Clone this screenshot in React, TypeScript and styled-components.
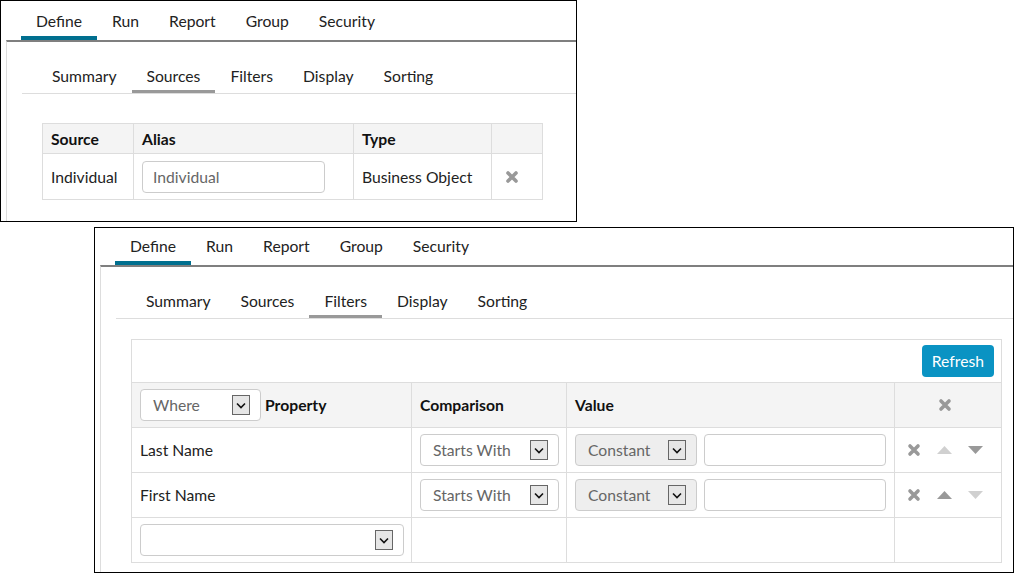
import styled, { createGlobalStyle } from 'styled-components';

const GlobalStyle = createGlobalStyle`
    body {
        margin: 0;
        background-color: white;
        font-family: Lato, 'Open Sans', sans-serif;
        font-size: 15.7px;
        color: #222;
    }
`;

const Page = styled.div`
    display: flex;
    flex-direction: column;
    align-items: flex-start;
`;

const Panel = styled.section<{ $width: number; $height: number; $offset?: number }>`
    box-sizing: border-box;
    display: flex;
    flex-direction: column;
    width: ${(p) => p.$width}px;
    height: ${(p) => p.$height}px;
    margin: ${(p) => (p.$offset ? `5px 0 0 ${p.$offset}px` : '0')};
    padding-left: 5px;
    border: 1px solid #000;
    background: #fff;
`;

const TabBar = styled.nav<{ $top: number }>`
    display: flex;
    padding: ${(p) => p.$top}px 0 0 15px;
`;

const Tab = styled.div<{ $active?: boolean }>`
    padding: 0 15px 5px;
    line-height: 20px;
    color: #222;
    border-bottom: 4px solid ${(p) => (p.$active ? '#006f8f' : 'transparent')};
`;

const TabContent = styled.div`
    flex: 1;
    padding-left: 15px;
    border-top: 2px solid #7f7f7f;
    border-left: 1px solid #ddd;
`;

const SubTabBar = styled.nav`
    display: flex;
    margin-top: 20px;
    padding-left: 15px;
    border-bottom: 1px solid #ddd;
`;

const SubTab = styled.div<{ $active?: boolean }>`
    padding: 4px 15px;
    line-height: 20px;
    color: #222;
    border-bottom: 3px solid ${(p) => (p.$active ? '#999' : 'transparent')};
`;

const Grid = styled.table<{ $width: number; $top: number; $left: number }>`
    width: ${(p) => p.$width}px;
    margin: ${(p) => p.$top}px 0 0 ${(p) => p.$left}px;
    border-collapse: collapse;
    table-layout: fixed;

    th,
    td {
        border: 1px solid #ddd;
        padding: 0 8px;
        text-align: left;
        vertical-align: middle;
    }

    th {
        background: #f4f4f4;
        font-weight: 700;
        color: #111;
    }
`;

const Row = styled.tr<{ $height: number }>`
    height: ${(p) => p.$height}px;
`;

const ToolbarCell = styled.td`
    && {
        text-align: right;
        padding: 0 7px;
    }
`;

const RefreshButton = styled.button`
    height: 32px;
    padding: 0 10px;
    border: none;
    border-radius: 4px;
    background: #0a93c3;
    color: #fff;
    font-family: inherit;
    font-size: 15.7px;
`;

const TextInput = styled.div<{ $width: number }>`
    box-sizing: border-box;
    display: flex;
    align-items: center;
    width: ${(p) => p.$width}px;
    height: 32px;
    padding: 0 10px;
    border: 1px solid #ccc;
    border-radius: 4px;
    color: #666;
    background: #fff;
`;

const Select = styled.div<{ $width: number; $disabled?: boolean }>`
    box-sizing: border-box;
    display: flex;
    align-items: center;
    justify-content: space-between;
    width: ${(p) => p.$width}px;
    height: 32px;
    padding: 0 10px 0 12px;
    border: 1px solid #ccc;
    border-radius: 4px;
    font-weight: 400;
    color: #666;
    background: ${(p) => (p.$disabled ? '#eee' : '#fff')};
`;

const ArrowBox = styled.span`
    box-sizing: border-box;
    display: flex;
    align-items: center;
    justify-content: center;
    width: 18px;
    height: 20px;
    border: 1px solid #666;
    background: #e6e6e6;
`;

const CellFlex = styled.div<{ $gap: number }>`
    display: flex;
    align-items: center;
    gap: ${(p) => p.$gap}px;
`;

const ActionsCell = styled.div`
    display: flex;
    align-items: center;
    gap: 16px;
    padding-left: 3px;
`;

const IconSlot = styled.span<{ $color: string }>`
    display: flex;
    align-items: center;
    justify-content: center;
    width: 15px;
    color: ${(p) => p.$color};
`;

const RemoveCell = styled.div<{ $pad: number }>`
    display: flex;
    padding-left: ${(p) => p.$pad}px;
    color: #999;
`;

function Chevron() {
    return (
        <svg width="10" height="7" viewBox="0 0 10 7">
            <polyline points="1,1.5 5,5.5 9,1.5" fill="none" stroke="#111" strokeWidth="1.6" />
        </svg>
    );
}

function Cross() {
    return (
        <svg width="14" height="14" viewBox="0 0 14 14">
            <path
                d="M3 3 L11 11 M11 3 L3 11"
                fill="none"
                stroke="currentColor"
                strokeWidth="3.6"
                strokeLinecap="round"
            />
        </svg>
    );
}

function Dropdown({ width, value, disabled }: { width: number; value?: string; disabled?: boolean }) {
    return (
        <Select $width={width} $disabled={disabled}>
            <span>{value}</span>
            <ArrowBox>
                <Chevron />
            </ArrowBox>
        </Select>
    );
}

function Triangle({ up }: { up?: boolean }) {
    return (
        <svg width="15" height="8" viewBox="0 0 15 8">
            <polygon points={up ? '7.5,0 15,8 0,8' : '0,0 15,0 7.5,8'} fill="currentColor" />
        </svg>
    );
}

const mainTabs = ['Define', 'Run', 'Report', 'Group', 'Security'];
const subTabs = ['Summary', 'Sources', 'Filters', 'Display', 'Sorting'];

function Tabs({ top }: { top: number }) {
    return (
        <TabBar $top={top}>
            {mainTabs.map((t) => (
                <Tab key={t} $active={t === 'Define'}>
                    {t}
                </Tab>
            ))}
        </TabBar>
    );
}

function SubTabs({ active }: { active: string }) {
    return (
        <SubTabBar>
            {subTabs.map((t) => (
                <SubTab key={t} $active={t === active}>
                    {t}
                </SubTab>
            ))}
        </SubTabBar>
    );
}

const filters = [
    { name: 'Last Name', upEnabled: false, downEnabled: true },
    { name: 'First Name', upEnabled: true, downEnabled: false },
];

export default function App() {
    return (
        <>
            <GlobalStyle />
            <Page>
                <Panel $width={577} $height={222}>
                    <Tabs top={10} />
                    <TabContent>
                        <SubTabs active="Sources" />
                        <Grid $width={500} $top={29} $left={20}>
                            <colgroup>
                                <col style={{ width: 91 }} />
                                <col style={{ width: 220 }} />
                                <col style={{ width: 138 }} />
                                <col style={{ width: 51 }} />
                            </colgroup>
                            <tbody>
                                <Row $height={30}>
                                    <th>Source</th>
                                    <th>Alias</th>
                                    <th>Type</th>
                                    <th />
                                </Row>
                                <Row $height={46}>
                                    <td>Individual</td>
                                    <td>
                                        <TextInput $width={183}>Individual</TextInput>
                                    </td>
                                    <td>Business Object</td>
                                    <td>
                                        <RemoveCell $pad={5}>
                                            <Cross />
                                        </RemoveCell>
                                    </td>
                                </Row>
                            </tbody>
                        </Grid>
                    </TabContent>
                </Panel>

                <Panel $width={920} $height={346} $offset={94}>
                    <Tabs top={8} />
                    <TabContent>
                        <SubTabs active="Filters" />
                        <Grid $width={870} $top={20} $left={15}>
                            <colgroup>
                                <col style={{ width: 280 }} />
                                <col style={{ width: 155 }} />
                                <col style={{ width: 328 }} />
                                <col style={{ width: 107 }} />
                            </colgroup>
                            <tbody>
                                <Row $height={43}>
                                    <ToolbarCell colSpan={4}>
                                        <RefreshButton>Refresh</RefreshButton>
                                    </ToolbarCell>
                                </Row>
                                <Row $height={45}>
                                    <th>
                                        <CellFlex $gap={4}>
                                            <Dropdown width={121} value="Where" />
                                            <span>Property</span>
                                        </CellFlex>
                                    </th>
                                    <th>Comparison</th>
                                    <th>Value</th>
                                    <th>
                                        <RemoveCell $pad={35}>
                                            <Cross />
                                        </RemoveCell>
                                    </th>
                                </Row>
                                {filters.map((f) => (
                                    <Row key={f.name} $height={45}>
                                        <td>{f.name}</td>
                                        <td>
                                            <Dropdown width={139} value="Starts With" />
                                        </td>
                                        <td>
                                            <CellFlex $gap={7}>
                                                <Dropdown width={122} value="Constant" disabled />
                                                <TextInput $width={183} />
                                            </CellFlex>
                                        </td>
                                        <td>
                                            <ActionsCell>
                                                <IconSlot $color="#999">
                                                    <Cross />
                                                </IconSlot>
                                                <IconSlot $color={f.upEnabled ? '#999' : '#d0d0d0'}>
                                                    <Triangle up />
                                                </IconSlot>
                                                <IconSlot $color={f.downEnabled ? '#999' : '#d0d0d0'}>
                                                    <Triangle />
                                                </IconSlot>
                                            </ActionsCell>
                                        </td>
                                    </Row>
                                ))}
                                <Row $height={45}>
                                    <td>
                                        <Dropdown width={264} />
                                    </td>
                                    <td />
                                    <td />
                                    <td />
                                </Row>
                            </tbody>
                        </Grid>
                    </TabContent>
                </Panel>
            </Page>
        </>
    );
}
